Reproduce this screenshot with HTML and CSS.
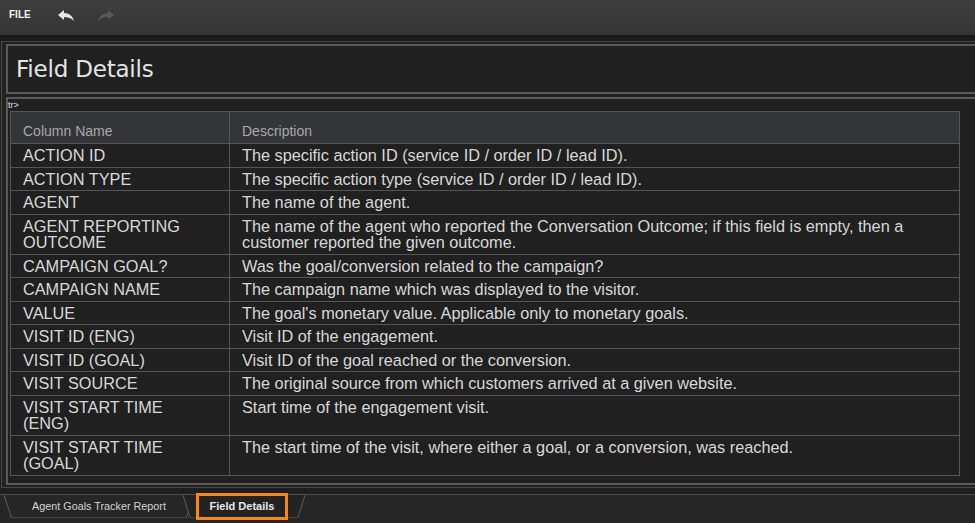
FILE: index.html
```html
<!DOCTYPE html>
<html>
<head>
<meta charset="utf-8">
<link rel="stylesheet" href="styles.css">
</head>
<body>
<div class="toolbar">
  <span class="file">FILE</span>
  <svg class="ico" width="18" height="13" viewBox="0 0 18 13"><path d="M7 1 L1 6 L7 11 V8 C11 8 14 9 17 12 C16 7 12 4 7 4 Z" fill="#e6e6e6"/></svg>
  <svg class="ico fwd" width="18" height="13" viewBox="0 0 18 13"><path d="M11 1 L17 6 L11 11 V8 C7 8 4 9 1 12 C2 7 6 4 11 4 Z" fill="#575757"/></svg>
</div>
<div class="band"></div>
<div class="frame">
  <div class="title-box"><h1 class="title">Field Details</h1></div>
  <div class="content-box">
    <div class="stray">tr&gt;</div>
    <table class="grid">
      <thead>
        <tr><th class="c1">Column Name</th><th>Description</th></tr>
      </thead>
      <tbody>
        <tr><td>ACTION ID</td><td>The specific action ID (service ID / order ID / lead ID).</td></tr>
        <tr><td>ACTION TYPE</td><td>The specific action type (service ID / order ID / lead ID).</td></tr>
        <tr><td>AGENT</td><td>The name of the agent.</td></tr>
        <tr class="tall"><td>AGENT REPORTING OUTCOME</td><td>The name of the agent who reported the Conversation Outcome; if this field is empty, then a customer reported the given outcome.</td></tr>
        <tr><td>CAMPAIGN GOAL?</td><td>Was the goal/conversion related to the campaign?</td></tr>
        <tr><td>CAMPAIGN NAME</td><td>The campaign name which was displayed to the visitor.</td></tr>
        <tr><td>VALUE</td><td>The goal's monetary value. Applicable only to monetary goals.</td></tr>
        <tr><td>VISIT ID (ENG)</td><td>Visit ID of the engagement.</td></tr>
        <tr><td>VISIT ID (GOAL)</td><td>Visit ID of the goal reached or the conversion.</td></tr>
        <tr><td>VISIT SOURCE</td><td>The original source from which customers arrived at a given website.</td></tr>
        <tr class="tall"><td>VISIT START TIME (ENG)</td><td>Start time of the engagement visit.</td></tr>
        <tr class="tall"><td>VISIT START TIME (GOAL)</td><td>The start time of the visit, where either a goal, or a conversion, was reached.</td></tr>
      </tbody>
    </table>
  </div>
</div>
<div class="tabbar">
  <div class="tab first">
    <svg class="tab-shape" viewBox="0 0 100 23" preserveAspectRatio="none"><polyline points="0,0 4,23 96,23 100,0" fill="none" stroke="#5c5c5c" stroke-width="1" vector-effect="non-scaling-stroke"/></svg>
    <span class="tab-label">Agent Goals Tracker Report</span>
  </div>
  <div class="tab active">
    <svg class="tab-shape" viewBox="0 0 100 23" preserveAspectRatio="none"><polyline points="0,0 6,23 94,23 100,0" fill="#232323" stroke="#5c5c5c" stroke-width="1" vector-effect="non-scaling-stroke"/></svg>
    <span class="tab-label focus">Field Details</span>
  </div>
</div>
</body>
</html>
```

FILE: styles.css
```css
html, body {
  margin: 0;
  padding: 0;
}
body {
  background: #1f1f1f;
  font-family: "Liberation Sans", Arial, sans-serif;
  width: 975px;
  height: 523px;
  overflow: hidden;
}
.toolbar {
  height: 35px;
  background: linear-gradient(#3d3d3d, #353535);
  display: flex;
  align-items: center;
  padding-left: 9px;
  box-sizing: border-box;
}
.file {
  color: #f2f2f2;
  font-size: 10px;
  font-weight: bold;
  margin-top: -6px;
}
.ico {
  margin-left: 26px;
  margin-top: -4px;
}
.ico.fwd {
  margin-left: 22px;
}
.band {
  height: 6px;
  background: #1b1b1b;
}
.frame {
  width: 1100px;
  margin-left: 1px;
  border: 1px solid #474747;
  border-right: none;
  padding: 2px 0 2px 4px;
  background: #222;
}
.title-box {
  border: 2px solid #5a5a5a;
  height: 46px;
  background: #202020;
  display: flex;
  align-items: center;
}
.title {
  margin: 0 0 0 8px;
  font-family: "DejaVu Sans", Verdana, sans-serif;
  font-weight: normal;
  font-size: 23px;
  letter-spacing: -0.2px;
  color: #e4e4e4;
}
.content-box {
  margin-top: 3px;
  border: 2px solid #5a5a5a;
  padding: 1px 0 7px 2px;
  background: #202020;
}
.stray {
  font-size: 9px;
  line-height: 11px;
  color: #d6e2f0;
  margin-left: -2px;
  height: 11px;
}
.grid {
  width: 950px;
  border-collapse: collapse;
  border: 1px solid #555;
  color: #d8d8d8;
  font-size: 16.3px;
}
.grid th {
  background: #333538;
  color: #a9a9a9;
  font-size: 14px;
  font-weight: normal;
  text-align: left;
  height: 32px;
  box-sizing: border-box;
  vertical-align: bottom;
  padding: 0 12px 4px 12px;
  border-left: 1px solid #555;
  border-bottom: 1px solid #555;
}
.grid th.c1 {
  width: 219px;
  box-sizing: border-box;
  border-left: none;
}
.grid td {
  padding: 3px 12px 3.56px 12px;
  line-height: 16px;
  vertical-align: top;
  border-bottom: 1px solid #555;
  border-left: 1px solid #555;
}
.grid td:first-child {
  border-left: none;
  padding-right: 30px;
}
.grid tr.tall td {
  padding-bottom: 4px;
}
.tabbar {
  margin-top: 6px;
  height: 40px;
  background: #262626;
  border-top: 1px solid #4e4e4e;
  display: flex;
  padding-left: 4px;
}
.tab {
  position: relative;
  height: 23px;
  display: flex;
  align-items: center;
  justify-content: center;
}
.tab.first {
  width: 190px;
}
.tab.active {
  width: 122px;
  margin-left: -11px;
}
.tab-shape {
  position: absolute;
  left: 0;
  top: 0;
  width: 100%;
  height: 100%;
}
.tab-label {
  position: relative;
  font-size: 10.8px;
  color: #d4d4d4;
}
.tab-label.focus {
  box-sizing: border-box;
  width: 92px;
  height: 27px;
  display: flex;
  align-items: center;
  justify-content: center;
  font-weight: bold;
  font-size: 11px;
  color: #e8e8e8;
  border: 3px solid #f7861c;
  margin: 0 0 0 -4px;
}
```
